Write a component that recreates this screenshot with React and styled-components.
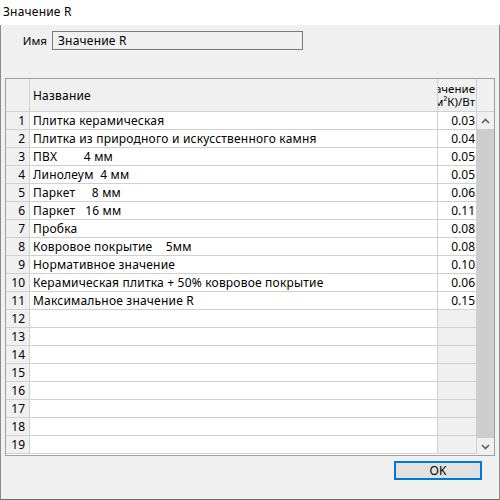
import styled, { createGlobalStyle } from 'styled-components';

const GlobalStyle = createGlobalStyle`
body {
  margin: 0;
  font-family: "Noto Sans", "Liberation Sans", sans-serif;
  font-size: 12px;
  letter-spacing: 0.2px;
  color: #000;
}
`;

const rows = [
    ['Плитка керамическая', '0.03'],
    ['Плитка из природного и искусственного камня', '0.04'],
    ['ПВХ        4 мм', '0.05'],
    ['Линолеум  4 мм', '0.05'],
    ['Паркет     8 мм', '0.06'],
    ['Паркет   16 мм', '0.11'],
    ['Пробка', '0.08'],
    ['Ковровое покрытие    5мм', '0.08'],
    ['Нормативное значение', '0.10'],
    ['Керамическая плитка + 50% ковровое покрытие', '0.06'],
    ['Максимальное значение R', '0.15'],
];

const App = () => {
    const all = [];
    for (let i = 0; i < 19; i++) all.push(rows[i] || null);
    return (
        <Window>
            <GlobalStyle />
            <TitleBar>Значение R</TitleBar>
            <Body>
                <NameRow>
                    <NameLabel>Имя</NameLabel>
                    <NameInput>Значение R</NameInput>
                </NameRow>
                <Grid>
                    <Table>
                        <HeadCell />
                        <HeadCell>Название</HeadCell>
                        <ValueHead>
                            <span>Значение<br />(м²К)/Вт</span>
                        </ValueHead>
                        {all.map((r, i) => (
                            <Row key={i}>
                                <NumCell>{i + 1}</NumCell>
                                <NameCell>{r ? r[0] : ''}</NameCell>
                                <ValueCell $empty={!r}>{r ? r[1] : ''}</ValueCell>
                            </Row>
                        ))}
                    </Table>
                    <ScrollCol>
                        <ScrollHead />
                        <ScrollBar>
                            <ArrowBtn>
                                <svg width="9" height="6" viewBox="0 0 9 6">
                                    <path d="M1 5 L4.5 1.5 L8 5" fill="none" stroke="#606060" strokeWidth="1.6" />
                                </svg>
                            </ArrowBtn>
                            <Thumb />
                            <ArrowBtn>
                                <svg width="9" height="6" viewBox="0 0 9 6">
                                    <path d="M1 1 L4.5 4.5 L8 1" fill="none" stroke="#606060" strokeWidth="1.6" />
                                </svg>
                            </ArrowBtn>
                        </ScrollBar>
                    </ScrollCol>
                </Grid>
                <Footer>
                    <OkButton>OK</OkButton>
                </Footer>
            </Body>
        </Window>
    );
};

const Window = styled.div`
width: 500px;
height: 500px;
display: flex;
flex-direction: column;
overflow: hidden;
`;

const TitleBar = styled.div`
height: 25px;
line-height: 24px;
background: #fff;
padding-left: 3px;
font-size: 12px;
`;

const Body = styled.div`
flex: 1;
background: #f0f0f0;
border-left: 1px solid #8c8c8c;
border-right: 1px solid #8c8c8c;
border-bottom: 1px solid #6c6c6c;
display: flex;
flex-direction: column;
padding: 6px 4px 0 4px;
`;

const NameRow = styled.div`
display: flex;
align-items: center;
gap: 5px;
`;

const NameLabel = styled.span`
width: 42px;
text-align: right;
font-size: 11.5px;
letter-spacing: 0;
`;

const NameInput = styled.div`
width: 251px;
height: 19px;
box-sizing: border-box;
border: 1px solid #7a7a7a;
background: #f0f0f0;
padding-left: 5px;
line-height: 17px;
`;

const Grid = styled.div`
margin-top: 28px;
width: 490px;
height: 378px;
box-sizing: border-box;
border: 1px solid #a0a0a0;
display: flex;
background: #fff;
`;

const Table = styled.div`
width: 471px;
height: 376px;
overflow: hidden;
display: grid;
grid-template-columns: 24px 408px 39px;
grid-auto-rows: 18px;
grid-template-rows: 33px;
align-content: start;
`;

const Row = styled.div`
display: contents;
`;

const Cell = styled.div`
box-sizing: border-box;
border-right: 1px solid #d0d0d0;
border-bottom: 1px solid #d0d0d0;
white-space: pre;
overflow: hidden;
line-height: 17px;
`;

const HeadCell = styled(Cell)`
background: #f0f0f0;
padding-left: 3px;
display: flex;
align-items: center;
`;

const ValueHead = styled(Cell)`
background: #f0f0f0;
display: flex;
justify-content: flex-end;
align-items: center;
padding-right: 1px;
line-height: 13px;
font-size: 11.5px;
letter-spacing: 0;
& > span {
  white-space: nowrap;
  text-align: right;
}
`;

const NumCell = styled(Cell)`
background: #f0f0f0;
text-align: right;
padding-right: 4px;
letter-spacing: 0;
`;

const NameCell = styled(Cell)`
background: #fff;
padding-left: 3px;
`;

const ValueCell = styled(Cell)`
background: ${(p) => (p.$empty ? '#f0f0f0' : '#fff')};
text-align: right;
padding-right: 1px;
letter-spacing: 0;
`;

const ScrollCol = styled.div`
width: 17px;
display: flex;
flex-direction: column;
`;

const ScrollHead = styled.div`
height: 33px;
background: #f0f0f0;
border-bottom: 1px solid #d0d0d0;
box-sizing: border-box;
`;

const ScrollBar = styled.div`
flex: 1;
background: #f0f0f0;
display: flex;
flex-direction: column;
`;

const ArrowBtn = styled.div`
height: 17px;
display: flex;
align-items: center;
justify-content: center;
`;

const Thumb = styled.div`
flex: 1;
background: #cdcdcd;
`;

const Footer = styled.div`
display: flex;
justify-content: flex-end;
padding: 5px 13px 0 0;
`;

const OkButton = styled.button`
width: 88px;
height: 19px;
box-sizing: border-box;
border: 2px solid #0078d7;
background: #e1e1e1;
font-family: inherit;
font-size: 12px;
padding: 0;
line-height: 15px;
color: #000;
`;

export default App;
